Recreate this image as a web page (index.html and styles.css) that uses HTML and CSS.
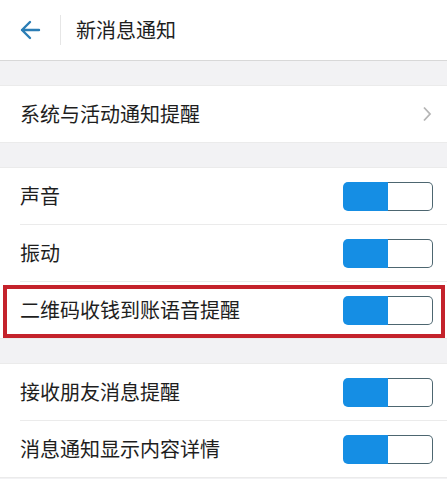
FILE: index.html
```html
<!DOCTYPE html>
<html lang="zh-CN">
<head>
    <meta charset="UTF-8">
    <meta name="viewport" content="width=device-width, initial-scale=1.0">
    <title>新消息通知</title>
    <link rel="stylesheet" href="styles.css">
</head>
<body>
    <div class="header">
        <div class="back">
            <svg width="22" height="20" viewBox="0 0 22 20">
                <path d="M20 10H3M11 2L3 10l8 8" fill="none" stroke="#2b7db5" stroke-width="2.4" stroke-linecap="round" stroke-linejoin="round"/>
            </svg>
        </div>
        <div class="sep"></div>
        <div class="title">新消息通知</div>
    </div>

    <div class="group">
        <div class="row">
            <span class="label">系统与活动通知提醒</span>
            <svg class="chevron" width="10" height="16" viewBox="0 0 10 16">
                <path d="M2 1.5l6 6.5-6 6.5" fill="none" stroke="#b5b5b5" stroke-width="1.8"/>
            </svg>
        </div>
    </div>

    <div class="group">
        <div class="row">
            <span class="label">声音</span>
            <div class="switch"><span class="on"></span><span class="off"></span></div>
        </div>
        <div class="row">
            <span class="label">振动</span>
            <div class="switch"><span class="on"></span><span class="off"></span></div>
        </div>
        <div class="row marked">
            <span class="label">二维码收钱到账语音提醒</span>
            <div class="switch"><span class="on"></span><span class="off"></span></div>
        </div>
    </div>

    <div class="group">
        <div class="row">
            <span class="label">接收朋友消息提醒</span>
            <div class="switch"><span class="on"></span><span class="off"></span></div>
        </div>
        <div class="row">
            <span class="label">消息通知显示内容详情</span>
            <div class="switch"><span class="on"></span><span class="off"></span></div>
        </div>
    </div>
</body>
</html>
```

FILE: styles.css
```css
body {
    margin: 0;
    background-color: #f2f2f4;
    font-family: "Noto Sans CJK SC", "Noto Sans", sans-serif;
    color: #1e1e1e;
}
.header {
    height: 60px;
    background-color: #fff;
    border-bottom: 1px solid #d8d8d8;
    display: flex;
    align-items: center;
}
.back {
    width: 60px;
    display: flex;
    justify-content: center;
}
.back svg {
    display: block;
}
.sep {
    width: 1px;
    height: 30px;
    background-color: #e6e6e6;
}
.title {
    font-size: 20px;
    margin-left: 15px;
    line-height: 1;
}
.group {
    background-color: #fff;
    margin-top: 24px;
    padding-left: 20px;
    border-top: 1px solid #ebebeb;
    border-bottom: 1px solid #ebebeb;
}
.row {
    height: 56px;
    display: flex;
    align-items: center;
    justify-content: space-between;
    padding-right: 14px;
    position: relative;
}
.row + .row {
    border-top: 1px solid #ebebeb;
}
.label {
    font-size: 20px;
    line-height: 1;
}
.chevron {
    margin-right: 1px;
}
.switch {
    display: flex;
    width: 90px;
    height: 29px;
}
.switch .on {
    width: 45px;
    background-color: #158ee4;
    border-radius: 5px 0 0 5px;
}
.switch .off {
    flex: 1;
    background-color: #fff;
    border: 1px solid #4d6670;
    border-left: none;
    border-radius: 0 5px 5px 0;
}
.marked::after {
    content: "";
    position: absolute;
    left: -17px;
    right: 2px;
    top: 3px;
    bottom: 0;
    border: 4px solid #c4222b;
}
```
